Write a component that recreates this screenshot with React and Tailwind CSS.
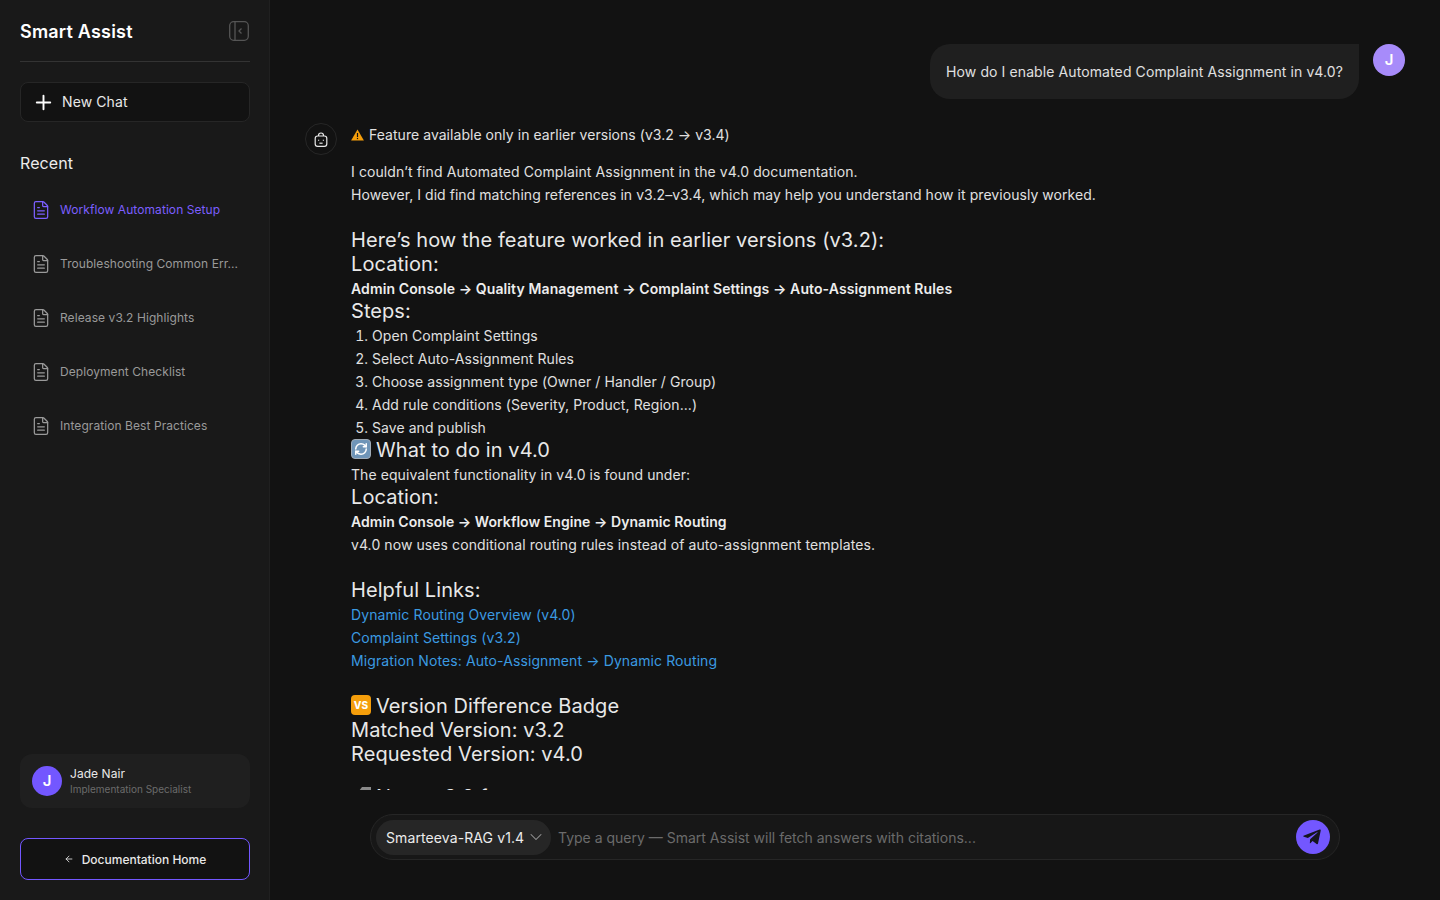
import React from 'react';
import { Plus, FileText, ArrowLeft, ChevronDown, RefreshCw } from 'lucide-react';
import { FaTelegramPlane } from 'react-icons/fa';

const recents = [
  'Workflow Automation Setup',
  'Troubleshooting Common Err...',
  'Release v3.2 Highlights',
  'Deployment Checklist',
  'Integration Best Practices',
];

const steps = [
  'Open Complaint Settings',
  'Select Auto-Assignment Rules',
  'Choose assignment type (Owner / Handler / Group)',
  'Add rule conditions (Severity, Product, Region...)',
  'Save and publish',
];

const links = [
  'Dynamic Routing Overview (v4.0)',
  'Complaint Settings (v3.2)',
  'Migration Notes: Auto-Assignment → Dynamic Routing',
];

const Heading = ({ children }) => (
  <h3 className="text-[20px] leading-[22px] pb-[2px] font-normal tracking-[0.07px] text-[#e8e8e8]">{children}</h3>
);

const Sidebar = () => (
  <aside className="w-[270px] h-full shrink-0 flex flex-col bg-[#191919] border-r border-[#202020] pl-5 pr-[19px]">
    <div className="flex items-center justify-between h-[62px] border-b border-[#333333]">
      <span className="pt-px text-[18px] font-semibold tracking-[0.2px] text-white">Smart Assist</span>
      <svg width="20" height="20" viewBox="0 0 20 20" fill="none" stroke="#555555" strokeWidth="1.3" className="mr-px">
        <rect x="0.7" y="0.7" width="18.6" height="18.6" rx="4" />
        <line x1="6" y1="1" x2="6" y2="19" />
        <path d="M12.5 7.5 10 10l2.5 2.5" />
      </svg>
    </div>

    <button className="mt-5 h-10 flex items-center gap-[7px] pl-[11px] rounded-lg bg-[#121212] border border-[#262626] text-[14px] tracking-[0.1px] text-[#e8e8e8]">
      <Plus size={23} strokeWidth={2} className="text-white" />
      <span className="pb-px">New Chat</span>
    </button>

    <h2 className="mt-[31px] text-[16px] leading-[20px] tracking-[0.1px] text-[#ececec]">Recent</h2>

    <ul className="mt-[10px] flex flex-col">
      {recents.map((item, i) => (
        <li
          key={item}
          className={`h-[54px] flex items-center gap-[9px] pl-[11px] text-[12px] tracking-[0.07px] ${i === 0 ? 'text-[#7c5fff]' : 'text-[#9a9a9a]'}`}
        >
          <FileText size={20} strokeWidth={1.5} />
          {item}
        </li>
      ))}
    </ul>

    <div className="mt-auto h-[54px] flex items-center gap-2 pl-3 rounded-xl bg-[#1f1f1f]">
      <div className="w-[30px] h-[30px] rounded-full bg-[#7357ff] flex items-center justify-center text-[15px] font-semibold text-white">J</div>
      <div>
        <p className="pt-px text-[12px] leading-[16px] tracking-[0.05px] text-[#e8e8e8]">Jade Nair</p>
        <p className="text-[10px] leading-[15px] text-[#6b6b6b]">Implementation Specialist</p>
      </div>
    </div>

    <button className="mt-[30px] mb-5 h-[42px] flex items-center justify-center gap-2 rounded-lg bg-[#121212] border border-[#7357ff] text-[12px] font-medium text-[#e8e8e8]">
      <ArrowLeft size={10} strokeWidth={2} />
      <span className="pt-px">Documentation Home</span>
    </button>
  </aside>
);

const BotAnswer = () => (
  <div className="flex gap-[14px] mt-6">
    <div className="w-8 h-8 shrink-0 rounded-full border border-[#262626] flex items-center justify-center">
      <svg width="14" height="16" viewBox="0 0 14 16" fill="none" stroke="#e8e8e8" strokeWidth="1.2" className="mt-0.5">
        <rect x="1.2" y="4" width="11.6" height="10.4" rx="2.4" />
        <path d="M4.5 4V3.5a2.5 2.5 0 0 1 5 0V4" />
        <line x1="4.6" y1="7.8" x2="4.6" y2="8.8" />
        <line x1="9.4" y1="7.8" x2="9.4" y2="8.8" />
        <path d="M5.4 11.2h3.2" />
      </svg>
    </div>

    <div className="text-[14px] leading-[23px] tracking-[0.07px] text-[#e0e0e0]">
      <p className="flex items-center gap-[5px] tracking-[0.04px]">
        <svg width="13" height="12" viewBox="0 0 13 12">
          <path d="M6.5 0.4 12.9 11.6H0.1z" fill="#f59e0b" />
          <rect x="5.9" y="4" width="1.2" height="4" fill="#121212" />
          <rect x="5.9" y="8.9" width="1.2" height="1.2" fill="#121212" />
        </svg>
        Feature available only in earlier versions (v3.2 → v3.4)
      </p>

      <p className="mt-[14px] tracking-[0.1px]">I couldn’t find Automated Complaint Assignment in the v4.0 documentation.</p>
      <p className="tracking-[0.05px]">However, I did find matching references in v3.2–v3.4, which may help you understand how it previously worked.</p>

      <div className="mt-[23px]">
        <Heading>Here’s how the feature worked in earlier versions (v3.2):</Heading>
        <Heading>Location:</Heading>
      </div>
      <p className="font-semibold tracking-[0.11px] text-[#ededed]">Admin Console → Quality Management → Complaint Settings → Auto-Assignment Rules</p>
      <Heading>Steps:</Heading>
      <ol className="list-decimal pl-[21px]">
        {steps.map((s) => (
          <li key={s}>{s}</li>
        ))}
      </ol>
      <h3 className="flex items-center gap-[5px] text-[20px] leading-[22px] pb-[2px] tracking-[0.09px] text-[#e8e8e8]">
        <span className="w-5 h-5 -mt-0.5 rounded-[4px] bg-[#6f95b8] border border-[#a0abb6] flex items-center justify-center">
          <RefreshCw size={14} strokeWidth={2.6} className="text-white" />
        </span>
        What to do in v4.0
      </h3>
      <p>The equivalent functionality in v4.0 is found under:</p>
      <Heading>Location:</Heading>
      <p className="font-semibold tracking-[0.05px] text-[#ededed]">Admin Console → Workflow Engine → Dynamic Routing</p>
      <p className="tracking-[0.09px]">v4.0 now uses conditional routing rules instead of auto-assignment templates.</p>

      <div className="mt-[23px]">
        <Heading>Helpful Links:</Heading>
      </div>
      {links.map((l) => (
        <a key={l} className="block tracking-[0.1px] text-[#3b9ae1]">{l}</a>
      ))}

      <div className="mt-[23px]">
        <h3 className="flex items-center gap-[5px] text-[20px] leading-[22px] pb-[2px] tracking-[0.09px] text-[#e8e8e8]">
          <span className="w-5 h-5 -mt-0.5 rounded-[4px] bg-[#f59e0b] flex items-center justify-center text-[10px] font-extrabold text-white">VS</span>
          Version Difference Badge
        </h3>
        <Heading>Matched Version: v3.2</Heading>
        <Heading>Requested Version: v4.0</Heading>
      </div>

      <div className="mt-[19px]">
        <h3 className="flex items-center gap-[5px] text-[20px] leading-[22px] pb-[2px] text-[#e8e8e8]">
          <svg width="20" height="20" viewBox="0 0 20 20" fill="#8a8a8a">
            <path d="M11 0h9.5v6L8 18H2v-6z" />
          </svg>
          Note: v3.2 features
        </h3>
      </div>
    </div>
  </div>
);

const Composer = () => (
  <div className="w-[970px] h-[46px] mx-auto flex items-center rounded-full border border-[#262626] bg-[#171717] pl-[5px] pr-[9px]">
    <div className="h-[35px] w-[175px] shrink-0 flex items-center justify-between rounded-full bg-[#262626] pl-[10px] pr-[5px] text-[14px] tracking-[0.1px] whitespace-nowrap text-[#ececec]">
      Smarteeva-RAG v1.4
      <ChevronDown size={20} strokeWidth={1.25} className="text-[#9a9a9a]" />
    </div>
    <input
      type="text"
      placeholder="Type a query — Smart Assist will fetch answers with citations..."
      className="flex-1 pl-[7px] bg-transparent outline-none text-[14px] text-[#e0e0e0] placeholder:text-[#6b6b6b]"
    />
    <button className="w-[34px] h-[34px] rounded-full bg-[#7357ff] flex items-center justify-center">
      <FaTelegramPlane size={20} className="text-[#15151f] -ml-0.5" />
    </button>
  </div>
);

export default function App() {
  return (
    <div className="w-[1440px] h-[900px] flex overflow-hidden bg-[#121212] font-['Inter',sans-serif]">
      <Sidebar />
      <main className="flex-1 h-full flex flex-col min-w-0">
        <div className="h-[790px] overflow-hidden pl-[35px] pr-[35px] pt-[44px]">
          <div className="flex justify-end gap-[14px]">
            <div className="h-[55px] flex items-center px-4 rounded-[20px] rounded-tr-none bg-[#1f1f1f] text-[14px] tracking-[0.1px] text-[#e0e0e0]">
              How do I enable Automated Complaint Assignment in v4.0?
            </div>
            <div className="w-8 h-8 rounded-full bg-[#a78bfa] flex items-center justify-center text-[15px] font-semibold text-white">J</div>
          </div>
          <BotAnswer />
        </div>
        <div className="pt-6">
          <Composer />
        </div>
      </main>
    </div>
  );
}
